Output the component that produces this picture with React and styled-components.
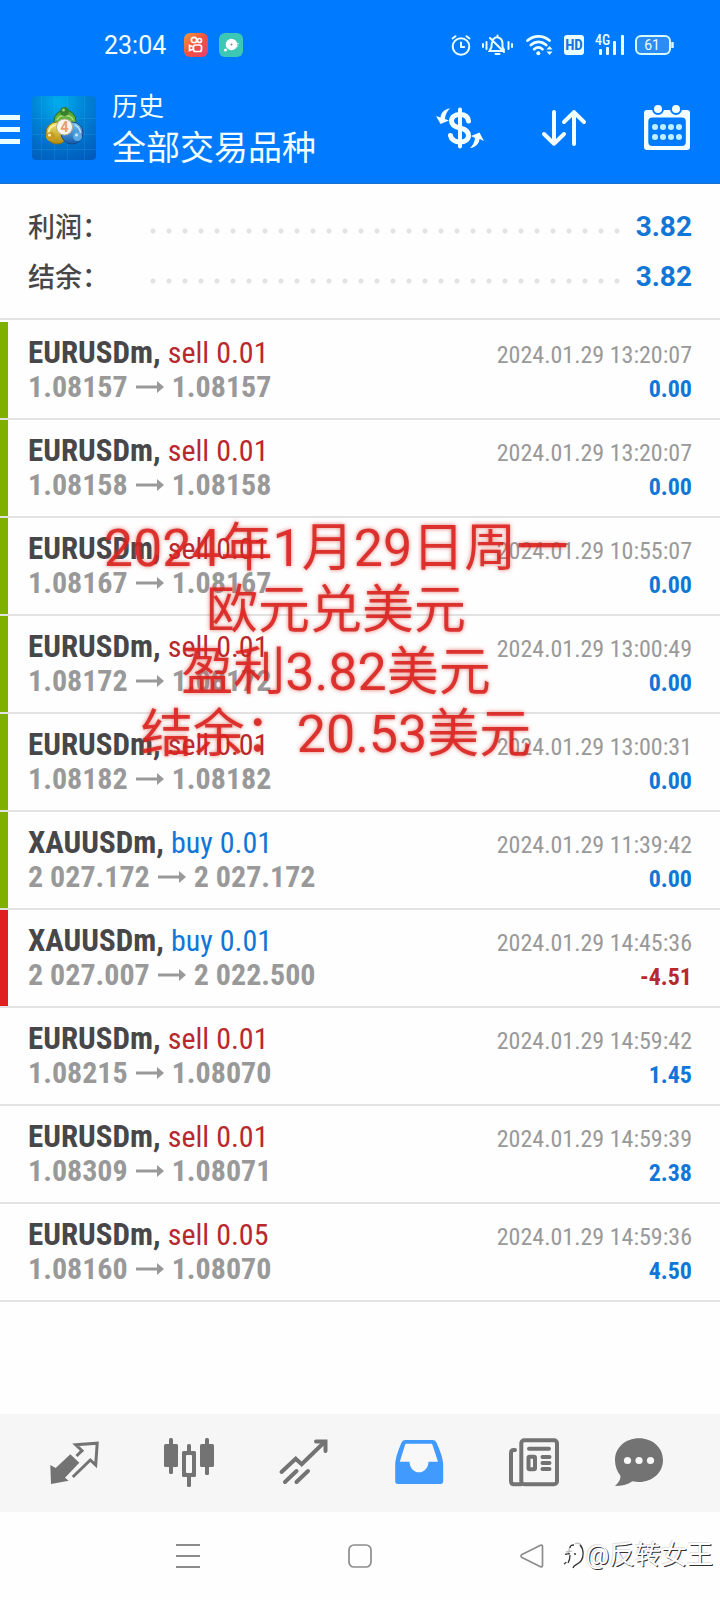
import styled, { createGlobalStyle } from 'styled-components';

const deals = [
  { symbol: 'EURUSDm', side: 'sell', volume: '0.01', open: '1.08157', close: '1.08157', time: '2024.01.29 13:20:07', profit: '0.00', mark: '#7fb000' },
  { symbol: 'EURUSDm', side: 'sell', volume: '0.01', open: '1.08158', close: '1.08158', time: '2024.01.29 13:20:07', profit: '0.00', mark: '#7fb000' },
  { symbol: 'EURUSDm', side: 'sell', volume: '0.01', open: '1.08167', close: '1.08167', time: '2024.01.29 10:55:07', profit: '0.00', mark: '#7fb000' },
  { symbol: 'EURUSDm', side: 'sell', volume: '0.01', open: '1.08172', close: '1.08172', time: '2024.01.29 13:00:49', profit: '0.00', mark: '#7fb000' },
  { symbol: 'EURUSDm', side: 'sell', volume: '0.01', open: '1.08182', close: '1.08182', time: '2024.01.29 13:00:31', profit: '0.00', mark: '#7fb000' },
  { symbol: 'XAUUSDm', side: 'buy', volume: '0.01', open: '2 027.172', close: '2 027.172', time: '2024.01.29 11:39:42', profit: '0.00', mark: '#7fb000' },
  { symbol: 'XAUUSDm', side: 'buy', volume: '0.01', open: '2 027.007', close: '2 022.500', time: '2024.01.29 14:45:36', profit: '-4.51', mark: '#e02020' },
  { symbol: 'EURUSDm', side: 'sell', volume: '0.01', open: '1.08215', close: '1.08070', time: '2024.01.29 14:59:42', profit: '1.45' },
  { symbol: 'EURUSDm', side: 'sell', volume: '0.01', open: '1.08309', close: '1.08071', time: '2024.01.29 14:59:39', profit: '2.38' },
  { symbol: 'EURUSDm', side: 'sell', volume: '0.05', open: '1.08160', close: '1.08070', time: '2024.01.29 14:59:36', profit: '4.50' },
];

const totals = [
  { label: '利润：', value: '3.82' },
  { label: '结余：', value: '3.82' },
];

function StatusIcons() {
  return (
    <StatusGroup>
      <svg width="20" height="24" viewBox="0 0 20 24" fill="none" stroke="#eaffff" strokeWidth="2" strokeLinecap="round">
        <circle cx="10" cy="13.5" r="8.3" />
        <path d="M10 9.5v4.5h3.2M1.5 5.5l3-2.3M18.5 5.5l-3-2.3" />
      </svg>
      <svg width="32" height="24" viewBox="0 0 32 24" fill="none" stroke="#eaffff" strokeWidth="2" strokeLinecap="round">
        <path d="M10 9.500c-.5 1.500-.5 3-.5 4.500l-2 4h14M11.500 6c3.500-3.500 9-1 9 4.500v3.500l1.500 3M15.500 2.500v1M13.500 21h4M8 5l14 14M1 11v3M4.500 9v7M26.500 9v7M30 11v3" />
      </svg>
      <svg width="28" height="24" viewBox="0 0 28 24" fill="none" stroke="#eaffff" strokeWidth="2.8" strokeLinecap="round">
        <path d="M2.500 7.500c6.500-5.500 15.500-5.500 22 0M5.800 12c4.700-4 10.700-4 15.400 0M9.200 16.200c2.500-2.200 5.800-2.200 8.300 0" />
        <circle cx="13.3" cy="20.3" r="2" fill="#eaffff" stroke="none" />
        <path d="M21.500 16.500l3-3.500 3 3.500zM21.500 18.500l3 3.500 3-3.500z" fill="#eaffff" stroke="none" />
      </svg>
      <svg width="20" height="24" viewBox="0 0 20 24">
        <rect y="2" width="20" height="20" rx="3" fill="#eaffff" />
        <text x="10" y="17" textAnchor="middle" fontFamily="Roboto Condensed, sans-serif" fontWeight="700" fontSize="15" fill="#1673dc">HD</text>
      </svg>
      <svg width="29" height="24" viewBox="0 0 29 24" fill="#eaffff">
        <text x="0" y="12" fontFamily="Roboto Condensed, sans-serif" fontSize="14" fontWeight="500">4G</text>
        <rect x="4" y="16" width="3" height="6" rx="1" />
        <rect x="11" y="14" width="3" height="8" rx="1" />
        <rect x="18" y="8" width="3" height="14" rx="1" />
        <rect x="26" y="2" width="3" height="20" rx="1" />
      </svg>
      <svg width="39" height="24" viewBox="0 0 39 24">
        <rect x="1" y="3" width="34" height="18" rx="5" fill="#2c8cf5" stroke="#d5fbff" strokeWidth="2" />
        <path d="M37.500 9v6" stroke="#d5fbff" strokeWidth="2.5" />
        <text x="17" y="17" textAnchor="middle" fontFamily="Roboto, sans-serif" fontSize="14" fill="#eaffff">61</text>
      </svg>
    </StatusGroup>
  );
}

function Notifications() {
  return (
    <>
      <svg width="24" height="24" viewBox="0 0 24 24">
        <defs>
          <linearGradient id="ks" x1="0" y1="0" x2="1" y2="1">
            <stop offset="0" stopColor="#f39a3d" />
            <stop offset=".5" stopColor="#f2523f" />
            <stop offset="1" stopColor="#e53f78" />
          </linearGradient>
        </defs>
        <rect width="24" height="24" rx="6" fill="url(#ks)" />
        <g fill="none" stroke="#fff" strokeWidth="1.7">
          <circle cx="10" cy="7" r="2.7" />
          <circle cx="15.5" cy="7.5" r="2" />
          <rect x="9.5" y="12" width="8" height="6.5" rx="2" />
          <path d="M9.500 14l-4-1.500v5l4-1.500" />
        </g>
      </svg>
      <svg width="24" height="24" viewBox="0 0 24 24">
        <rect width="24" height="24" rx="6" fill="#3cc8b4" />
        <circle cx="12.5" cy="11.5" r="5.8" fill="#fff" />
        <circle cx="12.5" cy="11.5" r="1" fill="#d06070" />
        <circle cx="6.5" cy="17" r="1.5" fill="#fff" />
        <path d="M18 10.500h2M18 13h1.500" stroke="#b8f2e8" />
      </svg>
    </>
  );
}

function AppLogo() {
  return (
    <svg width="64" height="64" viewBox="0 0 64 64">
      <defs>
        <radialGradient id="sky" cx=".42" cy=".1" r="1">
          <stop offset="0" stopColor="#00aeee" />
          <stop offset=".45" stopColor="#0080d4" />
          <stop offset="1" stopColor="#005bbd" />
        </radialGradient>
        <linearGradient id="green" x1="0" y1="0" x2="0" y2="1">
          <stop offset="0" stopColor="#4fa02c" />
          <stop offset="1" stopColor="#8ed05c" />
        </linearGradient>
        <linearGradient id="gold" x1="0" y1="0" x2="0" y2="1">
          <stop offset="0" stopColor="#f1e56f" />
          <stop offset="1" stopColor="#b08a10" />
        </linearGradient>
        <linearGradient id="blue" x1="0" y1="0" x2="0" y2="1">
          <stop offset="0" stopColor="#79c6f2" />
          <stop offset="1" stopColor="#1259ad" />
        </linearGradient>
      </defs>
      <rect width="64" height="64" rx="4" fill="url(#sky)" />
      <path d="M9.500 0v64M22.500 0v64M35.500 0v64M52.500 0v64M0 22.500h64M0 38.500h64M0 53.500h64" stroke="#48b8ef" strokeOpacity=".18" />
      <circle cx="33" cy="25" r="11" fill="url(#green)" stroke="#246b23" />
      <circle cx="25" cy="37" r="11" fill="url(#gold)" stroke="#8a7416" />
      <circle cx="40" cy="37" r="11" fill="url(#blue)" stroke="#174a82" />
      <path d="M25 24c2-6 14-6 16 0" stroke="#a9dc80" strokeWidth="1.5" fill="none" />
      <path d="M16.500 37c.5-5 3-7 7-8" stroke="#fdf8a8" strokeWidth="1.5" fill="none" />
      <path d="M48.500 37c-.5-4-2.500-6.500-5.500-8" stroke="#b9e4fa" strokeWidth="1.5" fill="none" />
      <circle cx="32.5" cy="15.5" r="4.5" fill="#37812b" />
      <circle cx="31.5" cy="14" r="1.5" fill="#98cf80" />
      <circle cx="18.5" cy="40.5" r="4.5" fill="#c79b22" />
      <circle cx="17.5" cy="39" r="1.5" fill="#fff3b0" />
      <circle cx="45.5" cy="40.5" r="4.5" fill="#5aa9e2" />
      <circle cx="44.5" cy="39" r="1.5" fill="#c9ecff" />
      <circle cx="32.5" cy="31" r="8" fill="#f6f4ee" stroke="#b5ad8c" />
      <text x="32.5" y="36" textAnchor="middle" fontFamily="Roboto, sans-serif" fontWeight="700" fontSize="14" fill="#ef9a6a">4</text>
    </svg>
  );
}

function CurrencyIcon() {
  return (
    <svg width="48" height="48" viewBox="0 0 48 48">
      <path d="M32.500 17c-.5-4-3.500-6.500-8.500-6.500s-8.500 2.500-8.500 6.500c0 4.500 4 6 8.500 7s8.500 3 8.500 7.500c0 4-3.500 6.500-8.500 6.500s-8.800-2.500-9.500-6.500" fill="none" stroke="#f2feff" strokeWidth="5" strokeLinecap="round" />
      <path d="M24 5.500v37" stroke="#f2feff" strokeWidth="4" strokeLinecap="round" />
      <path d="M14 4.500C8 5 5 9 4.500 13.500L0 12l4.500 8 8.500-3.500-4-1.500c.2-4 1.800-7.500 5-10.500z" fill="#f2feff" />
      <path d="M34 44c6-.5 9-4.500 9.500-9L48 37l-4.500-8.500-8.500 3.500 4 2c-.2 3.500-1.800 7-5 10z" fill="#f2feff" />
    </svg>
  );
}

function SortIcon() {
  return (
    <svg width="48" height="48" viewBox="0 0 48 48" fill="none" stroke="#f2feff" strokeWidth="4" strokeLinecap="round" strokeLinejoin="round">
      <path d="M14 8v31.500M4 30l10 9.700L24 30M34 40V8M24 18l10-9.700L44 18" />
    </svg>
  );
}

function CalendarIcon() {
  return (
    <svg width="48" height="48" viewBox="0 0 48 48">
      <rect y="6" width="46" height="40" rx="3" fill="#f2feff" />
      <rect x="4.3" y="13.5" width="37.5" height="28.5" rx="4" fill="#007aff" />
      <circle cx="14" cy="5" r="5" fill="#f2feff" stroke="#007aff" strokeWidth="2" />
      <circle cx="32" cy="5" r="5" fill="#f2feff" stroke="#007aff" strokeWidth="2" />
      {[23, 33].map(y => [11, 19, 27, 35].map(x => <circle key={`${x}-${y}`} cx={x} cy={y} r="3" fill="#bff0ff" />))}
    </svg>
  );
}

function TradeIcon() {
  return (
    <svg width="52" height="52" viewBox="0 0 52 52">
      <path d="M2.300 28l5.400 3 14.600-13.700 9 8.400-14.300 15 3.700 3L3 47z" fill="#737373" />
      <path d="M28.500 19l5.500-5.300-6.300-6 21.500-1.500L47.700 28l-5.400-5-17.500 17" fill="none" stroke="#737373" strokeWidth="3" />
    </svg>
  );
}

function CandlesIcon() {
  return (
    <svg width="52" height="52" viewBox="0 0 52 52" fill="#737373">
      <rect x="1" y="7" width="14" height="23" rx="1.5" />
      <rect x="6" y="1" width="4" height="36" rx="1.5" />
      <rect x="37" y="7" width="14" height="23" rx="1.5" />
      <rect x="42" y="1" width="4" height="37" rx="1.5" />
      <rect x="24" y="7" width="4" height="43" rx="1.5" />
      <rect x="19" y="14" width="14" height="26" rx="1.5" />
      <rect x="23" y="18" width="6" height="18" rx="1" fill="#f8f8f8" />
    </svg>
  );
}

function ChartIcon() {
  return (
    <svg width="52" height="52" viewBox="0 0 52 52" fill="none" stroke="#737373" strokeWidth="4" strokeLinecap="round">
      <path d="M3.500 35l14.200-13.300 6 5.600L46.500 5M7 45l11.500-11M18.500 45l11.500-11" />
      <path d="M38 4.500h9.500v9.500" />
    </svg>
  );
}

function HistoryIcon() {
  return (
    <svg width="52" height="52" viewBox="0 0 52 52">
      <path d="M12.500 3h27c2 0 3.500 1 4.200 3 3.600 8 6.500 16 6.500 22v16.500c0 1.500-1 2.500-2.500 2.500H4.700c-1.500 0-2.500-1-2.500-2.500V28c0-6 2.700-14 6.100-22 .8-2 2.200-3 4.200-3z" fill="#419bff" />
      <path d="M13.500 6.700h24.300c1 0 1.400.5 1.700 1.300L45 24.700H35.500c-.3 6-4 10.600-9.500 10.600s-9.200-4.600-9.500-10.600H6.800L12 8c.3-.8.700-1.300 1.500-1.300z" fill="#f8f8f8" />
    </svg>
  );
}

function NewsIcon() {
  return (
    <svg width="52" height="52" viewBox="0 0 52 52" fill="none" stroke="#737373" strokeWidth="4" strokeLinecap="round">
      <path d="M13 47.300H6c-1.800 0-3-1.200-3-3V16c0-2 1-3 3-3h1" />
      <rect x="13.3" y="3.3" width="35.7" height="44" rx="3" />
      <path d="M21 11.700h20M34.500 20H41.500M34.500 26H41.500M34.500 32H41.500" />
      <rect x="20.5" y="19.7" width="6.5" height="12.5" rx="1" />
    </svg>
  );
}

function ChatIcon() {
  return (
    <svg width="52" height="52" viewBox="0 0 52 52">
      <path d="M26 1.300c13.500 0 24 9.300 24 21.700 0 12.500-10.500 22-24 22-2.300 0-4.500-.3-6.500-.8C14.500 47.500 8.500 49 2 49c3.500-3 6-7 5.300-10.500C4 34.500 2 29 2 23 2 10.600 12.500 1.300 26 1.300z" fill="#737373" />
      <circle cx="14.5" cy="23.5" r="3.6" fill="#f8f8f8" />
      <circle cx="26" cy="23.5" r="3.6" fill="#f8f8f8" />
      <circle cx="37.5" cy="23.5" r="3.6" fill="#f8f8f8" />
    </svg>
  );
}

const tabs = [
  { name: '交易', Icon: TradeIcon },
  { name: '行情', Icon: CandlesIcon },
  { name: '图表', Icon: ChartIcon },
  { name: '历史', Icon: HistoryIcon },
  { name: '新闻', Icon: NewsIcon },
  { name: '消息', Icon: ChatIcon },
];

function Deal({ deal }) {
  return (
    <Row $mark={deal.mark}>
      <Line>
        <Symbol>{deal.symbol}, <Side $side={deal.side}>{deal.side} {deal.volume}</Side></Symbol>
        <Time>{deal.time}</Time>
      </Line>
      <Line>
        <Prices>
          {deal.open}
          <svg width="28" height="12" viewBox="0 0 28 12" fill="#999">
            <path d="M0 4.500h21V0l7 6-7 6V7.500H0z" />
          </svg>
          {deal.close}
        </Prices>
        <Profit $loss={deal.profit.startsWith('-')}>{deal.profit}</Profit>
      </Line>
    </Row>
  );
}

function App() {
  return (
    <Page>
      <GlobalStyle />
      <Header>
        <StatusBar>
          <Clock>23:04</Clock>
          <Notifications />
          <StatusIcons />
        </StatusBar>
        <Toolbar>
          <MenuButton aria-label="菜单"><span /><span /><span /></MenuButton>
          <AppLogo />
          <Heading>
            <h1>历史</h1>
            <p>全部交易品种</p>
          </Heading>
          <Actions>
            <IconButton aria-label="货币"><CurrencyIcon /></IconButton>
            <IconButton aria-label="排序"><SortIcon /></IconButton>
            <IconButton aria-label="日期"><CalendarIcon /></IconButton>
          </Actions>
        </Toolbar>
      </Header>

      <Summary>
        {totals.map(total => (
          <Total key={total.label}>
            <dt>{total.label}</dt>
            <Dots />
            <dd>{total.value}</dd>
          </Total>
        ))}
      </Summary>

      <History>
        <ul>
          {deals.map((deal, i) => <Deal key={i} deal={deal} />)}
        </ul>
        <Caption>
          2024年1月29日周一<br />
          欧元兑美元<br />
          盈利3.82美元<br />
          结余：20.53美元
        </Caption>
      </History>

      <Tabs>
        {tabs.map(({ name, Icon }) => (
          <IconButton key={name} aria-label={name}><Icon /></IconButton>
        ))}
      </Tabs>

      <SystemBar>
        <IconButton aria-label="最近任务">
          <svg width="24" height="24" viewBox="0 0 24 24" stroke="#8c8c8c" strokeWidth="2"><path d="M0 1h24M0 12h24M0 23h24" /></svg>
        </IconButton>
        <IconButton aria-label="主屏幕">
          <svg width="24" height="24" viewBox="0 0 24 24" fill="none" stroke="#8c8c8c" strokeWidth="1.7"><rect x="1" y="1" width="22" height="22" rx="5" /></svg>
        </IconButton>
        <IconButton aria-label="返回">
          <svg width="24" height="24" viewBox="0 0 24 24" fill="none" stroke="#8c8c8c" strokeWidth="1.7" strokeLinejoin="round"><path d="M2 10.500L20.500 1.300c1.200-.5 2 0 2 1.200v19c0 1.200-.8 1.700-2 1.200L2 13.500c-1.300-.8-1.300-2.200 0-3z" /></svg>
        </IconButton>
        <Watermark>
          <svg width="24" height="30" viewBox="0 0 24 30" fill="none" strokeWidth="1.3">
            <path d="M4 12c2-1 4 0 6-1M8 7c-1 2-1 4-2 7M13 4c3-2 7 0 7 5" stroke="#bbb" />
            <path d="M2 24c1-1 2-1 2-2M3 14c2 1 3-1 5 0M6 23c2-3 2-5 2-8M8 8c0-3 2-3 4-3M18 5c4 4 4 12 1 16-3 4-7 3-8 7M12 14h2" stroke="#333" />
          </svg>
          @反转女王
        </Watermark>
      </SystemBar>
    </Page>
  );
}

export default App;

const GlobalStyle = createGlobalStyle`
  * {
    box-sizing: border-box;
    margin: 0;
    padding: 0;
  }

  body {
    background: #fefefe;
    font-family: Roboto, "Noto Sans CJK SC", sans-serif;
  }

  ul {
    list-style: none;
  }

  svg {
    display: block;
    flex: none;
  }
`

const Page = styled.div`
  min-height: 100vh;
  display: flex;
  flex-direction: column;
`

const Header = styled.header`
  background: #007aff;
  border-bottom: 1px solid #1a6fd0;
  color: #f2feff;
`

const StatusBar = styled.div`
  height: 72px;
  padding: 18px 46px 0 104px;
  display: flex;
  align-items: center;
  gap: 11px;
`

const Clock = styled.span`
  width: 69px;
  font-size: 25px;
`

const StatusGroup = styled.div`
  margin-left: auto;
  display: flex;
  gap: 11px;
`

const Toolbar = styled.div`
  height: 111px;
  padding-right: 28px;
  display: flex;
  align-items: center;
`

const MenuButton = styled.button`
  width: 32px;
  height: 48px;
  padding-top: 4px;
  border: none;
  background: none;
  display: flex;
  flex-direction: column;
  justify-content: center;
  gap: 7px;

  span {
    width: 20px;
    height: 5px;
    background: #eaffff;
  }
`

const Heading = styled.div`
  padding-left: 16px;
  font-family: "Noto Sans CJK SC", sans-serif;

  h1 {
    font-size: 26px;
    font-weight: 400;
    line-height: 36px;
  }

  p {
    font-size: 34px;
    line-height: 46px;
  }
`

const Actions = styled.div`
  margin-left: auto;
  display: flex;
  gap: 56px;
`

const IconButton = styled.button`
  border: none;
  background: none;
  display: flex;
  justify-content: center;
  align-items: center;
`

const Summary = styled.dl`
  padding: 18px 28px 16px;
  border-bottom: 2px solid #e2e2e2;
`

const Total = styled.div`
  height: 50px;
  display: flex;
  align-items: center;

  dt {
    width: 117px;
    padding-bottom: 3px;
    font-family: "Noto Sans CJK SC", sans-serif;
    font-size: 27px;
    font-weight: 500;
    line-height: 46px;
    color: #47474a;
  }

  dd {
    width: 67px;
    font-size: 28px;
    font-weight: 700;
    line-height: 50px;
    text-align: right;
    color: #1276d6;
  }
`

const Dots = styled.span`
  flex: 1;
  height: 6px;
  margin-top: 8px;
  background: radial-gradient(circle, #e2e2e2 2px, transparent 3px) 0 0 / 16px 6px repeat-x;
`

const History = styled.main`
  position: relative;
  flex: 1;
  padding-top: 2px;
  font-family: "Roboto Condensed", Roboto, sans-serif;
`

const Row = styled.li`
  padding: 14px 28px;
  border-bottom: 2px solid #e2e2e2;
  background: linear-gradient(${props => props.$mark || 'transparent'} 0 0) 0 0 / 8px 100% no-repeat;
  background-clip: padding-box;
`

const Line = styled.div`
  display: flex;
  justify-content: space-between;
  align-items: baseline;
  height: 34px;
  line-height: 34px;
`

const Symbol = styled.strong`
  font-size: 31px;
  font-weight: 700;
  color: #47474a;
`

const Side = styled.span`
  font-size: 30px;
  font-weight: 400;
  color: ${props => props.$side === 'buy' ? '#1276d6' : '#b8292e'};
`

const Time = styled.time`
  font-size: 24px;
  color: #999;
`

const Prices = styled.span`
  display: flex;
  align-items: center;
  gap: 8px;
  font-size: 30px;
  font-weight: 700;
  color: #999;
`

const Profit = styled.span`
  font-size: 24px;
  font-weight: 700;
  color: ${props => props.$loss ? '#b8292e' : '#1276d6'};
`

const Caption = styled.p`
  position: absolute;
  top: 198px;
  left: 0;
  right: 48px;
  font-family: Roboto, "Noto Sans CJK SC", sans-serif;
  font-size: 52px;
  line-height: 62px;
  text-align: center;
  color: rgba(218, 32, 28, 0.88);
  text-shadow: 0 0 4px rgba(214, 70, 60, 0.7);
  pointer-events: none;
`

const Tabs = styled.nav`
  height: 98px;
  padding: 0 33px 0 16px;
  display: grid;
  grid-template-columns: repeat(5, 115fr) 96fr;
  background: #f6f6f6;
`

const SystemBar = styled.footer`
  position: relative;
  height: 88px;
  display: flex;
  justify-content: center;
  align-items: center;
  gap: 148px;
`

const Watermark = styled.span`
  position: absolute;
  right: 7px;
  top: 27px;
  display: flex;
  align-items: center;
  font-size: 26px;
  line-height: 32px;
  color: #fff;
  text-shadow: 1px 1px 0 #333, -1px -1px 0 #e2e2e2;
`
